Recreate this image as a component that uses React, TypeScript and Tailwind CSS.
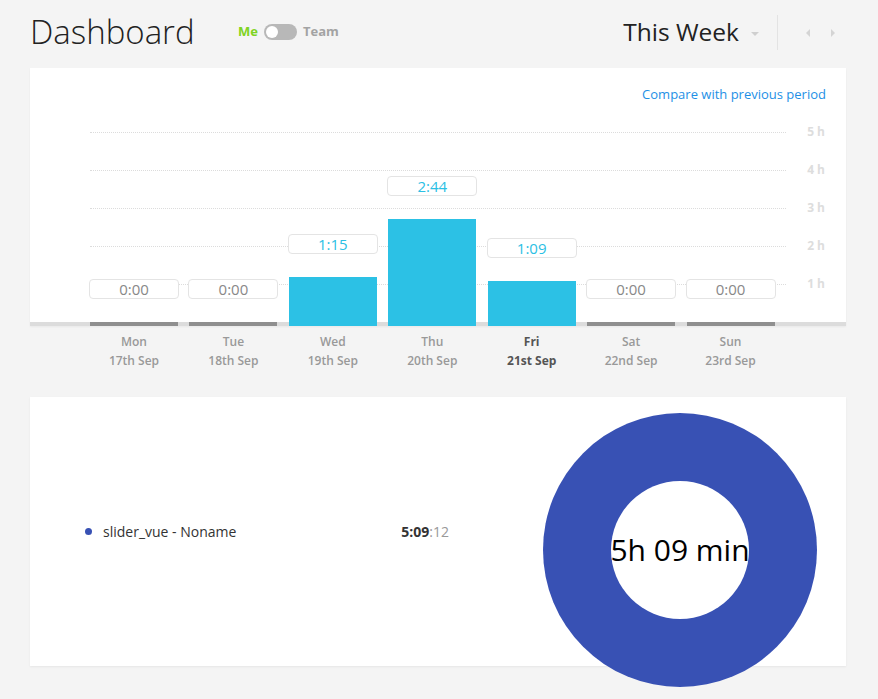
import React from "react";

const days = [
  { d: "Mon", date: "17th Sep", v: "0:00", h: 0 },
  { d: "Tue", date: "18th Sep", v: "0:00", h: 0 },
  { d: "Wed", date: "19th Sep", v: "1:15", h: 49 },
  { d: "Thu", date: "20th Sep", v: "2:44", h: 107 },
  { d: "Fri", date: "21st Sep", v: "1:09", h: 45, bold: true },
  { d: "Sat", date: "22nd Sep", v: "0:00", h: 0 },
  { d: "Sun", date: "23rd Sep", v: "0:00", h: 0 },
];

const grid = ["5 h", "4 h", "3 h", "2 h", "1 h"];

export default function App() {
  return (
    <div
      className="min-h-[699px] w-full bg-[#f4f4f4] pl-[30px]"
      style={{ fontFamily: "'Open Sans', 'Liberation Sans', sans-serif" }}
    >
      <div className="w-[816px]">
        {/* Header */}
        <div className="flex h-[68px] items-start pt-[15px]">
          <div className="flex items-center">
            <h1 className="w-[208px] text-[33px] font-light leading-[34px] text-[#222]">Dashboard</h1>
            <div className="flex items-center">
              <span className="text-[13px] font-bold text-[#7ed321]">Me</span>
              <div className="ml-[6px] flex h-[16px] w-[33px] items-center rounded-full bg-[#b8b8b8] px-[2px]">
                <div className="h-[12px] w-[12px] rounded-full bg-white" />
              </div>
              <span className="ml-[6px] text-[13px] font-bold text-[#a3a3a3]">Team</span>
            </div>
          </div>
          <div className="ml-auto flex h-[35px] items-center">
            <span className="text-[24.5px] font-medium leading-none text-[#222]">This Week</span>
            <div className="ml-[12px] mt-[2px] h-0 w-0 border-x-[4px] border-t-[4px] border-x-transparent border-t-[#cfcfcf]" />
            <div className="ml-[18px] h-[35px] w-px bg-[#e3e3e3]" />
            <div className="ml-[28px] h-0 w-0 border-y-[4px] border-r-[4px] border-y-transparent border-r-[#d4d4d4]" />
            <div className="ml-[21px] mr-[11px] h-0 w-0 border-y-[4px] border-l-[4px] border-y-transparent border-l-[#d4d4d4]" />
          </div>
        </div>

        {/* Chart card */}
        <div className="bg-white shadow-[0_1px_2px_rgba(0,0,0,0.05)]">
          <div className="flex justify-end pr-[20px] pt-[17px]">
            <span className="text-[13px] leading-[18px] text-[#1e90e6]">Compare with previous period</span>
          </div>
          <div className="relative h-[223px]">
            {/* gridlines */}
            <div className="absolute left-0 right-0 top-[10px] flex flex-col">
              {grid.map((g) => (
                <div key={g} className="flex h-[38px] items-center">
                  <div className="ml-[60px] w-[696px] border-t border-dotted border-[#dcdcdc]" />
                  <span className="ml-auto mr-[21px] text-[12px] font-bold leading-none text-[#dddddd]">{g}</span>
                </div>
              ))}
            </div>
            {/* base line */}
            <div className="absolute bottom-0 left-0 right-0 h-[4px] bg-[#dcdcdc]" />
            {/* bars */}
            <div className="relative ml-[60px] flex h-full w-[696px] items-end">
              {days.map((day) => (
                <div key={day.d} className="flex-1">
                  <div className="flex w-[88px] flex-col items-center">
                    <div
                      className={`flex h-[20px] w-[90px] items-center justify-center rounded-[4px] border border-[#e4e4e4] bg-white text-[15px] leading-none ${
                        day.h > 0 ? "text-[#2bc0e4]" : "text-[#888]"
                      }`}
                    >
                      {day.v}
                    </div>
                    {day.h > 0 ? (
                      <div className="mt-[23px] w-[88px] bg-[#2cc1e5]" style={{ height: day.h }} />
                    ) : (
                      <div className="mt-[23px] h-[4px] w-[88px] bg-[#8f8f8f]" />
                    )}
                  </div>
                </div>
              ))}
            </div>
          </div>
        </div>

        {/* Day labels */}
        <div className="ml-[60px] flex w-[696px] pt-[6px]">
          {days.map((day) => (
            <div key={day.d} className="flex-1">
              <div
                className={`flex w-[88px] flex-col items-center text-[12px] leading-[19px] ${
                  day.bold ? "font-bold text-[#555]" : "font-semibold text-[#999]"
                }`}
              >
                <span>{day.d}</span>
                <span>{day.date}</span>
              </div>
            </div>
          ))}
        </div>

        {/* Second card */}
        <div className="mt-[27px] flex h-[269px] bg-white shadow-[0_1px_2px_rgba(0,0,0,0.06)]">
          <div className="flex w-[513px] items-center pl-[55px]">
            <div className="h-[7px] w-[7px] rounded-full bg-[#3851b4]" />
            <span className="ml-[11px] text-[14px] text-[#333]">slider_vue - Noname</span>
            <span className="ml-auto mr-[94px] text-[14px] text-[#999]">
              <span className="font-bold text-[#333]">5:09</span>:12
            </span>
          </div>
          <div className="mt-[16px] flex h-[274px] w-[274px] shrink-0 items-center justify-center rounded-full bg-[#3851b4]">
            <div className="flex h-[138px] w-[138px] items-center justify-center rounded-full bg-white">
              <span className="whitespace-nowrap text-[30px] leading-none text-black">5h 09 min</span>
            </div>
          </div>
        </div>
      </div>
    </div>
  );
}
